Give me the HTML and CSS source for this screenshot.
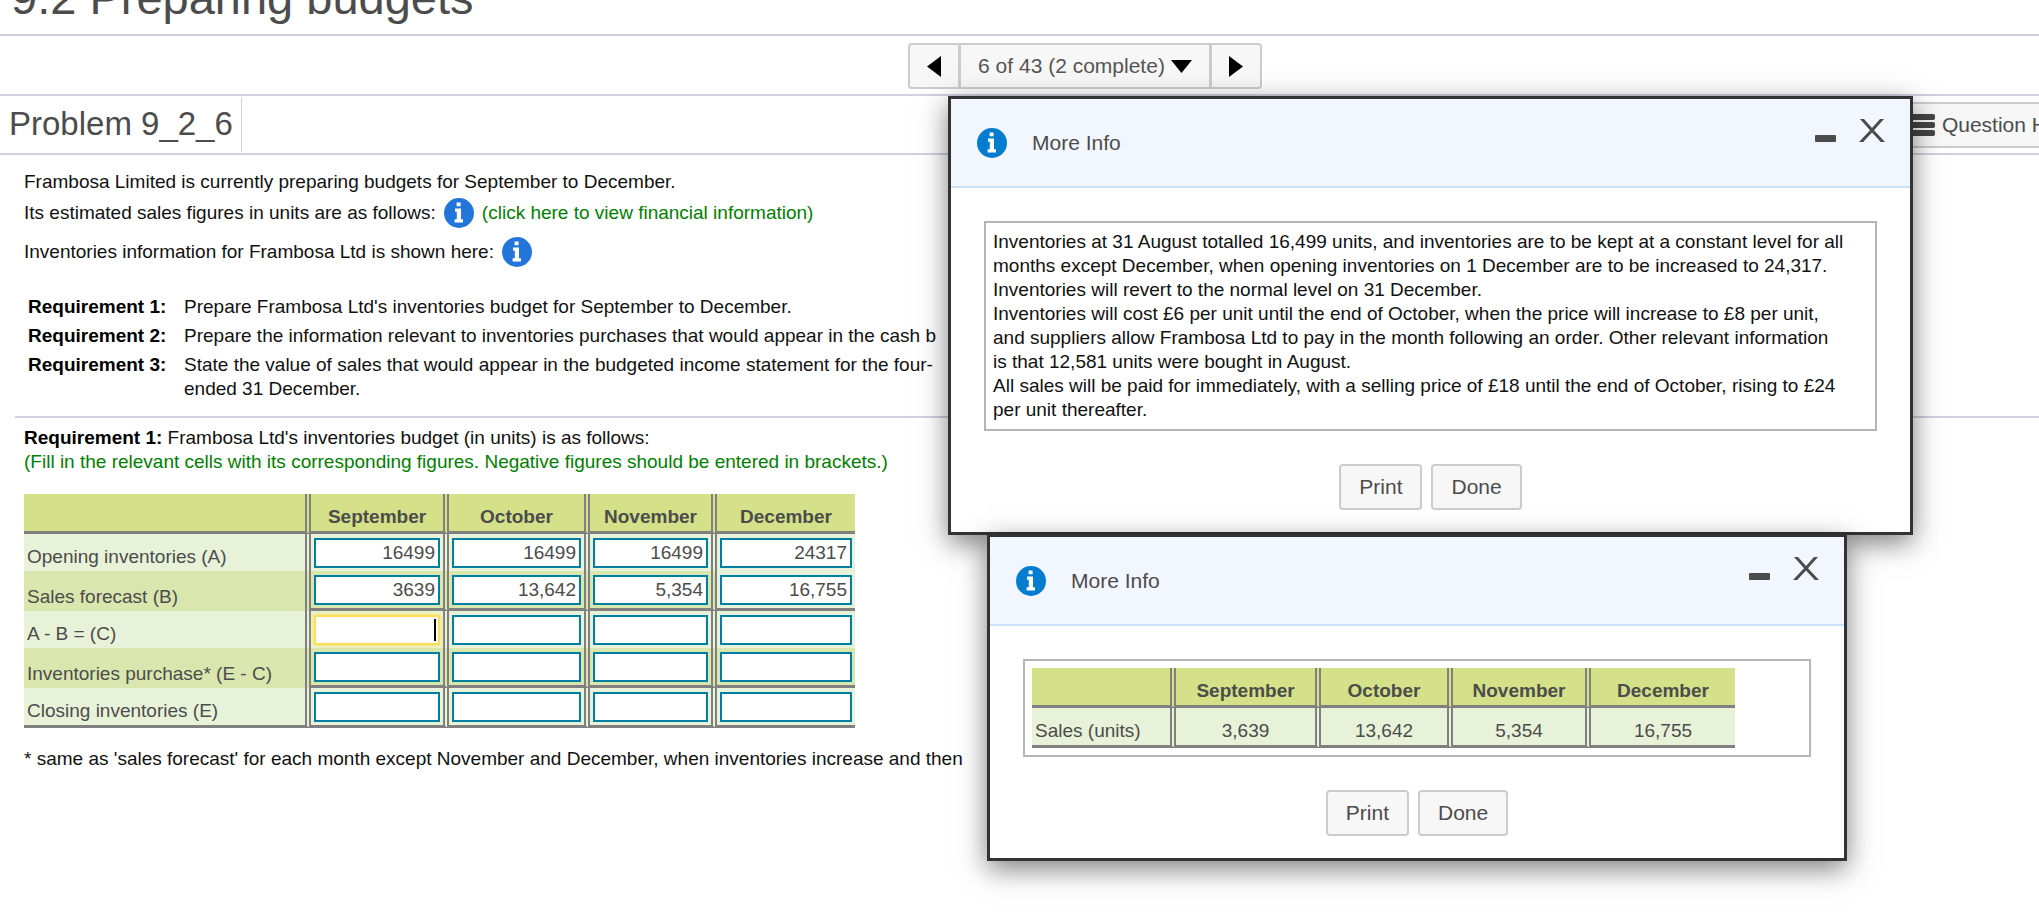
FILE: index.html
```html
<!DOCTYPE html>
<html lang="en">
<head>
<meta charset="utf-8">
<title>9.2 Preparing budgets</title>
<link rel="stylesheet" href="styles.css">
</head>
<body>
<svg class="defs" aria-hidden="true">
  <symbol id="info" viewBox="0 0 30 30">
    <circle cx="15" cy="15" r="15"/>
    <path fill="#fff" d="M12.6 4.4h4v3.8h-4zM11 10.6h6v10.6h2v3.2h-8.4v-3.2h2.2v-7.4H11z"/>
  </symbol>
  <symbol id="minus" viewBox="0 0 21 7"><rect width="21" height="7" rx="1"/></symbol>
  <symbol id="cross" viewBox="0 0 26 23"><path d="M1 0h4L13 9 21 0h4L15 11.3 26 23h-4.2L13 13.6 4.2 23H0L11 11.3z"/></symbol>
</svg>

<header class="chapter"><h1>9.2 Preparing budgets</h1></header>

<nav class="pager-bar">
  <div class="pager">
    <button type="button" aria-label="Previous question"><svg width="14" height="21" viewBox="0 0 14 21"><path d="M14 0v21L0 10.500z"/></svg></button>
    <button type="button" class="pager-list">6 of 43 (2 complete)<svg width="21" height="13" viewBox="0 0 21 13"><path d="M0 0h21L10.500 13z"/></svg></button>
    <button type="button" aria-label="Next question"><svg width="14" height="21" viewBox="0 0 14 21"><path d="M0 0v21l14-10.500z"/></svg></button>
  </div>
</nav>

<div class="problem-bar">
  <h2>Problem 9_2_6</h2>
  <button type="button" class="btn help"><svg width="24" height="22" viewBox="0 0 24 22"><g><rect width="24" height="6" rx="2"/><rect y="8" width="24" height="6" rx="2"/><rect y="16" width="24" height="6" rx="2"/></g></svg>Question Help</button>
</div>

<main>
  <section class="intro">
    <p>Frambosa Limited is currently preparing budgets for September to December.</p>
    <p class="with-icon first">Its estimated sales figures in units are as follows: <button type="button" class="info" aria-label="Financial information"><svg><use href="#info"/></svg></button><span class="green">(click here to view financial information)</span></p>
    <p class="with-icon second">Inventories information for Frambosa Ltd is shown here: <button type="button" class="info" aria-label="Inventories information"><svg><use href="#info"/></svg></button></p>
    <dl class="requirements">
      <dt>Requirement 1:</dt><dd>Prepare Frambosa Ltd's inventories budget for September to December.</dd>
      <dt>Requirement 2:</dt><dd>Prepare the information relevant to inventories purchases that would appear in the cash b</dd>
      <dt>Requirement 3:</dt><dd>State the value of sales that would appear in the budgeted income statement for the four-<br>ended 31 December.</dd>
    </dl>
  </section>
  <section class="answer">
    <p><b>Requirement 1:</b> Frambosa Ltd's inventories budget (in units) is as follows:</p>
    <p class="green">(Fill in the relevant cells with its corresponding figures. Negative figures should be entered in brackets.)</p>
    <table class="sheet budget">
      <colgroup><col class="c-label"><col class="c-sep"><col class="c-oct"><col class="c-nov"><col class="c-dec"></colgroup>
      <thead><tr><td></td><th scope="col">September</th><th scope="col">October</th><th scope="col">November</th><th scope="col">December</th></tr></thead>
      <tbody>
        <tr><th scope="row">Opening inventories (A)</th><td><input aria-label="Opening inventories, September" value="16499"></td><td><input aria-label="Opening inventories, October" value="16499"></td><td><input aria-label="Opening inventories, November" value="16499"></td><td><input aria-label="Opening inventories, December" value="24317"></td></tr>
        <tr class="alt ruled"><th scope="row">Sales forecast (B)</th><td><input aria-label="Sales forecast, September" value="3639"></td><td><input aria-label="Sales forecast, October" value="13,642"></td><td><input aria-label="Sales forecast, November" value="5,354"></td><td class="light"><input aria-label="Sales forecast, December" value="16,755"></td></tr>
        <tr><th scope="row">A - B = (C)</th><td><span class="active-cell"><input class="active" aria-label="A - B, September"></span></td><td><input aria-label="A - B, October"></td><td><input aria-label="A - B, November"></td><td><input aria-label="A - B, December"></td></tr>
        <tr class="alt ruled"><th scope="row">Inventories purchase* (E - C)</th><td><input aria-label="Inventories purchase, September"></td><td><input aria-label="Inventories purchase, October"></td><td><input aria-label="Inventories purchase, November"></td><td><input aria-label="Inventories purchase, December"></td></tr>
        <tr class="last"><th scope="row">Closing inventories (E)</th><td><input aria-label="Closing inventories, September"></td><td><input aria-label="Closing inventories, October"></td><td><input aria-label="Closing inventories, November"></td><td><input aria-label="Closing inventories, December"></td></tr>
      </tbody>
    </table>
    <p>* same as 'sales forecast' for each month except November and December, when inventories increase and then</p>
  </section>
</main>

<section class="dialog inventories" role="dialog" aria-labelledby="t1">
  <header>
    <svg class="dialog-icon"><use href="#info"/></svg>
    <h3 id="t1">More Info</h3>
    <button type="button" aria-label="Minimise"><svg class="minus"><use href="#minus"/></svg></button>
    <button type="button" aria-label="Close"><svg class="cross"><use href="#cross"/></svg></button>
  </header>
  <div class="dialog-body">
    <div class="frame">
      <p>Inventories at 31 August totalled 16,499 units, and inventories are to be kept at a constant level for all<br>months except December, when opening inventories on 1 December are to be increased to 24,317.<br>Inventories will revert to the normal level on 31 December.</p>
      <p>Inventories will cost £6 per unit until the end of October, when the price will increase to £8 per unit,<br>and suppliers allow Frambosa Ltd to pay in the month following an order. Other relevant information<br>is that 12,581 units were bought in August.</p>
      <p>All sales will be paid for immediately, with a selling price of £18 until the end of October, rising to £24<br>per unit thereafter.</p>
    </div>
    <div class="actions"><button type="button" class="btn">Print</button><button type="button" class="btn">Done</button></div>
  </div>
</section>

<section class="dialog sales" role="dialog" aria-labelledby="t2">
  <header>
    <svg class="dialog-icon"><use href="#info"/></svg>
    <h3 id="t2">More Info</h3>
    <button type="button" aria-label="Minimise"><svg class="minus"><use href="#minus"/></svg></button>
    <button type="button" aria-label="Close"><svg class="cross"><use href="#cross"/></svg></button>
  </header>
  <div class="dialog-body">
    <div class="frame">
      <table class="sheet units">
        <colgroup><col class="u-label"><col class="u-sep"><col class="u-oct"><col class="u-nov"><col class="u-dec"></colgroup>
        <thead><tr><td></td><th scope="col">September</th><th scope="col">October</th><th scope="col">November</th><th scope="col">December</th></tr></thead>
        <tbody><tr class="last"><th scope="row">Sales (units)</th><td>3,639</td><td>13,642</td><td>5,354</td><td>16,755</td></tr></tbody>
      </table>
    </div>
    <div class="actions"><button type="button" class="btn">Print</button><button type="button" class="btn">Done</button></div>
  </div>
</section>
</body>
</html>
```
FILE: styles.css
```css
* { box-sizing: border-box; }

body {
  margin: 0;
  overflow: hidden;
  background: #fff;
  color: #111;
  font: 19px/24px "Liberation Sans", Arial, sans-serif;
}

h1, h2, h3, p, dl, dd { margin: 0; font-weight: normal; }
button, input { font-family: inherit; margin: 0; }
svg { display: block; }
.defs { display: none; }
.green { color: #008000; }

/* Top bars */
.chapter { padding: 0 11px 8px; border-bottom: 2px solid #cdd1e0; }
.chapter h1 { margin-top: -30px; font-size: 47px; line-height: 56px; color: #4c4c4c; }

.pager-bar {
  display: flex;
  justify-content: center;
  padding: 7px 0 5px;
  border-bottom: 2px solid #cdd1e0;
}
.pager {
  display: flex;
  margin-left: 131px;
  height: 46px;
  border: 2px solid #ccc;
  border-radius: 4px;
  background: #f7f7f7;
}
.pager button {
  display: flex;
  align-items: center;
  justify-content: center;
  width: 48px;
  padding: 0;
  border: 0;
  background: none;
  color: #555;
  font-size: 21px;
}
.pager .pager-list {
  width: auto;
  gap: 6px;
  padding: 0 17px;
  border: solid #ccc;
  border-width: 0 3px;
}

.problem-bar {
  display: flex;
  align-items: center;
  justify-content: space-between;
  height: 59px;
  overflow: hidden;
  border-bottom: 2px solid #cdd1e0;
}
.problem-bar h2 {
  padding: 0 8px 2px 9px;
  border-right: 1px solid #cdd1e0;
  font-size: 33px;
  line-height: 52px;
  color: #4c4c4c;
}
.btn {
  height: 46px;
  padding: 0 18px;
  border: 2px solid #ccc;
  border-radius: 4px;
  background: #f7f7f7;
  color: #4c4c4c;
  font-size: 21px;
}
.help {
  display: flex;
  flex: none;
  align-items: center;
  gap: 7px;
  margin-right: -56px;
  fill: #444;
}

/* Question text */
.intro { padding: 15px 24px; }
.with-icon { display: flex; align-items: center; gap: 8px; }
.first { margin-top: 4px; }
.second { margin-top: 9px; }
.info { width: 30px; height: 30px; padding: 0; border: 0; background: none; fill: #2376d9; }
.info svg { width: 30px; height: 30px; }
.requirements {
  display: grid;
  grid-template-columns: 156px 1fr;
  row-gap: 5px;
  margin: 28px 0 0 4px;
}
.requirements dt, .answer b { font-weight: bold; color: #000; }

.answer { margin-left: 15px; padding: 8px 9px; border-top: 2px solid #cdd1e0; }

/* Tables */
.sheet { table-layout: fixed; border-collapse: separate; border-spacing: 0; color: #4c4c4c; }
.sheet th, .sheet td {
  height: 37px;
  padding: 4px 3px 3px;
  border-right: 6px double #808080;
  background: #e8f2d8;
  vertical-align: bottom;
  text-align: center;
}
.sheet th, .units td { padding-bottom: 2px; }
.sheet tr > :last-child { border-right: 0; }
.sheet tbody th { font-weight: normal; text-align: left; }
.sheet thead th, .sheet thead td { height: 40px; background: #d4e188; border-bottom: 3px solid #808080; }
.sheet .alt th, .sheet .alt td { background: #d9e6ae; }
.sheet .alt .light { background: #e8f2d8; }
.sheet .ruled th { height: 40px; }
.sheet .ruled td { border-bottom: 3px solid #808080; }
.sheet .last th, .sheet .last td { height: 40px; border-bottom: 3px solid #808080; }

.budget { width: 831px; margin: 20px 0 19px; }
.c-label { width: 287px; }
.c-sep, .c-dec { width: 138px; }
.c-oct { width: 141px; }
.c-nov { width: 127px; }

.units { width: 703px; }
.u-label, .u-dec { width: 144px; }
.u-sep { width: 145px; }
.u-oct { width: 132px; }
.u-nov { width: 138px; }

.sheet input {
  display: block;
  width: 100%;
  height: 30px;
  padding: 0 3px;
  border: 2px solid #007fa3;
  border-radius: 0;
  background: #fff;
  color: #4c4c4c;
  font-size: 19px;
  text-align: right;
}
.sheet .active { border-color: #ffdf4f; box-shadow: 0 0 5px #ffdf4f; }
.active-cell { display: block; position: relative; }
.active-cell::after {
  content: "";
  position: absolute;
  top: 4px;
  right: 4px;
  width: 2px;
  height: 22px;
  background: #000;
}

/* Floating windows */
.dialog {
  position: absolute;
  border: 3px solid #333;
  background: #fff;
  box-shadow: 0 8px 26px rgba(0, 0, 0, .5);
}
.inventories { top: 96px; left: 948px; width: 965px; }
.sales { top: 534px; left: 987px; width: 860px; }
.dialog header {
  display: flex;
  align-items: center;
  height: 89px;
  padding: 0 25px 0 26px;
  border-bottom: 2px solid #c9e3f8;
  background: #f2f6fe;
}
.dialog h3 { flex: 1; margin-left: 25px; font-size: 21px; color: #4c4c4c; }
.dialog header button {
  align-self: flex-start;
  display: flex;
  align-items: flex-end;
  height: 43px;
  margin-left: 23px;
  padding: 0;
  border: 0;
  background: none;
  fill: #4c4c4c;
}
.dialog-icon { width: 30px; height: 30px; fill: #047ccf; }
.minus { width: 21px; height: 7px; }
.cross { width: 26px; height: 23px; }
.dialog-body { padding: 33px 33px 22px; }
.frame { padding: 7px; border: 2px solid #b5b5b5; }
.actions { display: flex; justify-content: center; gap: 9px; margin-top: 33px; }
```
